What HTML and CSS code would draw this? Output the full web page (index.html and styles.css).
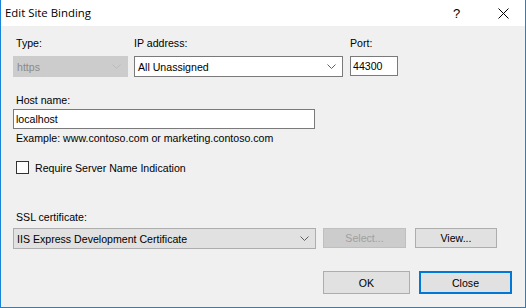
FILE: index.html
```html
<!DOCTYPE html>
<html lang="en">
<head>
  <meta charset="UTF-8">
  <title>Edit Site Binding</title>
  <link rel="stylesheet" href="styles.css">
</head>
<body>

  <div class="window">
    <!-- title bar -->
    <div class="titlebar">
      <span class="title">Edit Site Binding</span>
      <span class="help">?</span>
      <span class="close-x">
        <svg width="11" height="11" viewBox="0 0 11 11"><path d="M0.5 0.5 L10.5 10.5 M10.5 0.5 L0.5 10.5" stroke="#000" stroke-width="1" fill="none"/></svg>
      </span>
    </div>

    <div class="content">
      <div class="row-top">
        <div class="field type">
          <label>Type:</label>
          <div class="combo disabled">
            <span>https</span>
            <svg class="chev" width="9" height="5" viewBox="0 0 9 5"><path d="M0.5 0.5 L4.5 4.5 L8.5 0.5" stroke="#bcbcbc" fill="none"/></svg>
          </div>
        </div>
        <div class="field ip">
          <label>IP address:</label>
          <div class="combo white">
            <span>All Unassigned</span>
            <svg class="chev" width="9" height="5" viewBox="0 0 9 5"><path d="M0.5 0.5 L4.5 4.5 L8.5 0.5" stroke="#606060" fill="none"/></svg>
          </div>
        </div>
        <div class="field port">
          <label>Port:</label>
          <div class="textbox port-box">44300</div>
        </div>
      </div>

      <label class="host-label">Host name:</label>
      <div class="textbox host-box">localhost</div>
      <p class="hint">Example: www.contoso.com or marketing.contoso.com</p>

      <div class="check-row">
        <span class="checkbox"></span>
        <span>Require Server Name Indication</span>
      </div>

      <label class="ssl-label">SSL certificate:</label>
      <div class="ssl-row">
        <div class="combo gray ssl">
          <span>IIS Express Development Certificate</span>
          <svg class="chev" width="9" height="5" viewBox="0 0 9 5"><path d="M0.5 0.5 L4.5 4.5 L8.5 0.5" stroke="#606060" fill="none"/></svg>
        </div>
        <div class="button disabled select-btn">Select...</div>
        <div class="button view-btn">View...</div>
      </div>

      <div class="actions">
        <div class="button ok-btn">OK</div>
        <div class="button close-btn">Close</div>
      </div>
    </div>
  </div>

</body>
</html>
```

FILE: styles.css
```css
* { margin: 0; padding: 0; box-sizing: border-box; }

body {
  width: 526px;
  height: 308px;
  font-family: 'Liberation Sans', Arial, sans-serif;
  font-size: 10.6px;
  color: #000;
  background: #f0f0f0;
  overflow: hidden;
}

.window {
  width: 526px;
  height: 308px;
  border: 1px solid #1883d7;
  border-top: none;
  background: #f0f0f0;
  display: flex;
  flex-direction: column;
}

/* title bar */
.titlebar {
  height: 26px;
  background: #fff;
  display: flex;
  align-items: center;
  padding-left: 4px;
  font-family: 'Open Sans', 'Noto Sans', sans-serif;
  font-size: 11.4px;
}

.title {
  flex: 1;
  margin-top: -1px;
}

.help {
  width: 12px;
  font-family: 'Liberation Sans', sans-serif;
  font-size: 13px;
  margin-right: 33px;
}

.close-x {
  display: flex;
  margin-right: 16px;
}

/* body */
.content {
  padding: 0 12px;
  display: flex;
  flex-direction: column;
}

label {
  display: block;
  line-height: 13px;
}

.row-top {
  display: flex;
  margin-top: 11px;
}

.field label {
  margin-left: 3px;
  margin-bottom: 6px;
}

.field.ip label { margin-left: 0; }
.field.port label { margin-left: 0; }

.type { width: 115px; margin-right: 6px; }
.ip { width: 209px; margin-right: 7px; }
.port { width: 48px; }

.combo {
  height: 21px;
  display: flex;
  align-items: center;
  padding-left: 3px;
  padding-right: 6px;
  border: 1px solid #7a7a7a;
}

.combo span { flex: 1; }

.combo.disabled {
  background: #cccccc;
  border-color: #cccccc;
  color: #8a8a8a;
}

.combo.white {
  background: #fff;
}

.combo.gray {
  background: #e1e1e1;
  border-color: #adadad;
}

.textbox {
  background: #fff;
  border: 1px solid #7a7a7a;
  padding-left: 2px;
  display: flex;
  align-items: center;
}

.port-box { height: 20px; }

.host-label {
  margin-top: 17px;
  margin-left: 3px;
  margin-bottom: 2px;
}

.host-box {
  width: 302px;
  height: 20px;
}

.hint {
  margin-top: 3px;
  margin-left: 3px;
  line-height: 13px;
}

.check-row {
  display: flex;
  align-items: center;
  height: 13px;
  margin-top: 16px;
  margin-left: 3px;
}

.checkbox {
  width: 13px;
  height: 13px;
  border: 1px solid #333;
  background: #fff;
  margin-right: 6px;
}

.ssl-label {
  margin-top: 37px;
  margin-left: 3px;
  margin-bottom: 4px;
}

.ssl-row {
  display: flex;
  align-items: flex-start;
}

.ssl {
  width: 303px;
  margin-right: 7px;
}

.button {
  background: #e1e1e1;
  border: 1px solid #adadad;
  display: flex;
  align-items: center;
  justify-content: center;
}

.button.disabled {
  background: #cccccc;
  border-color: #bfbfbf;
  color: #a0a0a0;
}

.select-btn { width: 83px; height: 20px; margin-right: 9px; }
.view-btn { width: 82px; height: 20px; }

.actions {
  display: flex;
  justify-content: flex-end;
  margin-top: 22px;
  margin-right: 1px;
}

.ok-btn { width: 87px; height: 23px; margin-right: 9px; }

.close-btn {
  width: 93px;
  height: 23px;
  border: 2px solid #0078d7;
}
```
